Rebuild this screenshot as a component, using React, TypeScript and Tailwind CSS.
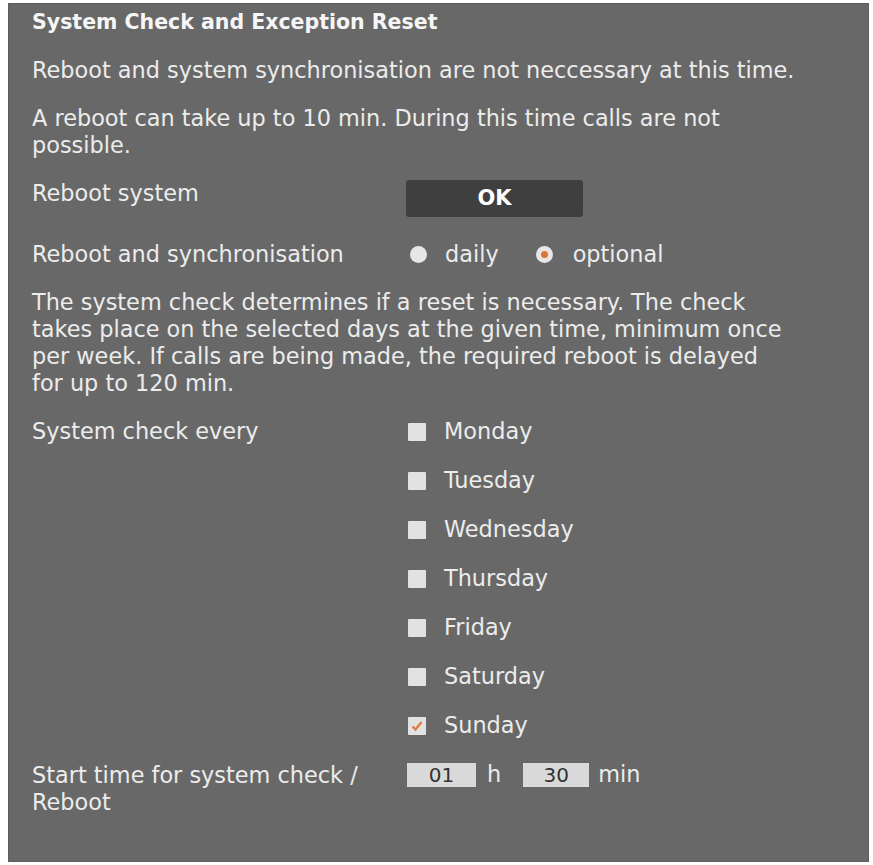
import React from 'react';

const days = ['Monday', 'Tuesday', 'Wednesday', 'Thursday', 'Friday', 'Saturday', 'Sunday'];

// ── Controls ───────────────────────────────────────────────────────────────

function Radio({ checked }: { checked?: boolean }) {
  return (
    <span className="inline-flex items-center justify-center w-[17px] h-[17px] rounded-full bg-[#e6e6e6]">
      {checked && <span className="w-[7px] h-[7px] rounded-full bg-[#d9743c]" />}
    </span>
  );
}

function Checkbox({ checked }: { checked?: boolean }) {
  return (
    <span className="inline-flex items-center justify-center w-[18px] h-[18px] bg-[#e2e2e2] rounded-[1px]">
      {checked && (
        <svg width="14" height="14" viewBox="0 0 14 14">
          <path d="M2.5 7.5 L5.5 10.5 L11.5 3" fill="none" stroke="#e0793a" strokeWidth="2.2" />
        </svg>
      )}
    </span>
  );
}

function Row({ label, children, className = '' }: { label: React.ReactNode; children?: React.ReactNode; className?: string }) {
  return (
    <div className={`flex items-start ${className}`}>
      <div className="w-[374px] shrink-0">{label}</div>
      <div>{children}</div>
    </div>
  );
}

// ── Page ───────────────────────────────────────────────────────────────────

export default function App() {
  return (
    <div className="w-[873px] h-[865px] bg-white pt-[3px] pl-[8px]">
      <div
        className="w-[861px] h-[859px] bg-[#686868] border border-[#5e5e5e] pt-[5px] pl-[23px] text-[#ececec] text-[22.4px] leading-[27px]"
        style={{ fontFamily: '"DejaVu Sans", Verdana, sans-serif' }}
      >
        <div className="w-[772px]">
          <h1 className="font-bold text-[#f6f6f6] text-[20.5px]">System Check and Exception Reset</h1>

          <p className="mt-[21px]">Reboot and system synchronisation are not neccessary at this time.</p>
          <p className="mt-[21px]">A reboot can take up to 10 min. During this time calls are not possible.</p>

          <Row label="Reboot system" className="mt-[21px]">
            <button className="w-[177px] h-[37px] rounded-[3px] bg-[#3f3f3f] font-bold text-white text-[21px]">
              OK
            </button>
          </Row>

          <Row label="Reboot and synchronisation" className="mt-[24px]">
            <div className="flex items-center h-[27px]">
              <span className="ml-[4px] flex"><Radio /></span>
              <span className="ml-[18px]">daily</span>
              <span className="ml-[37px] flex"><Radio checked /></span>
              <span className="ml-[20px]">optional</span>
            </div>
          </Row>

          <p className="mt-[21px]">
            The system check determines if a reset is necessary. The check
            <br />
            takes place on the selected days at the given time, minimum once
            <br />
            per week. If calls are being made, the required reboot is delayed
            <br />
            for up to 120 min.
          </p>

          <Row label="System check every" className="mt-[21px]">
            <div className="flex flex-col gap-[22px]">
              {days.map((d) => (
                <div key={d} className="flex items-center h-[27px]">
                  <span className="ml-[2px] flex"><Checkbox checked={d === 'Sunday'} /></span>
                  <span className="ml-[18px]">{d}</span>
                </div>
              ))}
            </div>
          </Row>

          <Row
            label={
              <span>
                Start time for system check /<br />
                Reboot
              </span>
            }
            className="mt-[23px]"
          >
            <div className="flex items-center h-[27px] -mt-[1px]">
              <span className="ml-[1px] w-[69px] h-[24px] bg-[#d9d9d9] text-[#333] text-[20px] leading-[24px] text-center">01</span>
              <span className="ml-[11px]">h</span>
              <span className="ml-[22px] w-[66px] h-[24px] bg-[#d9d9d9] text-[#333] text-[20px] leading-[24px] text-center">30</span>
              <span className="ml-[9px]">min</span>
            </div>
          </Row>
        </div>
      </div>
    </div>
  );
}
